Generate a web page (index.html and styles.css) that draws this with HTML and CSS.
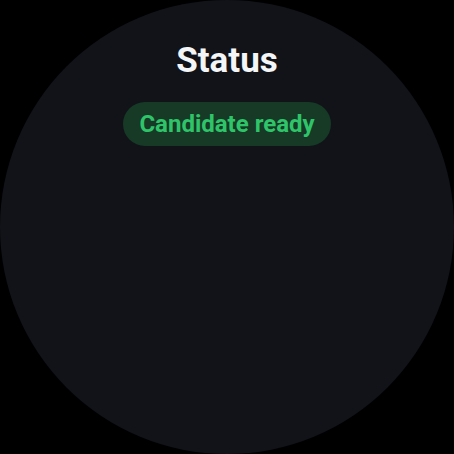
FILE: index.html
```html
<!DOCTYPE html>
<html lang="en">

<head>
    <meta charset="UTF-8">
    <meta name="viewport" content="width=device-width, initial-scale=1.0">
    <title>Status</title>
    <link rel="stylesheet" href="styles.css">
</head>

<body>
    <main class="watch">
        <h1 class="title">Status</h1>
        <div class="pill">Candidate ready</div>
    </main>
</body>

</html>
```

FILE: styles.css
```css
html,
body {
    margin: 0;
    height: 100%;
    background: #000;
}

body {
    font-family: Roboto, "Liberation Sans", sans-serif;
}

/* 表盘：整个圆 */
.watch {
    width: 454px;
    height: 454px;
    border-radius: 50%;
    background: #111318;
    display: flex;
    flex-direction: column;
    align-items: center;
    box-sizing: border-box;
    padding-top: 40px;
}

.title {
    margin: 0;
    font-size: 35px;
    font-weight: 700;
    line-height: 42px;
    color: #f4f5f7;
}

.pill {
    margin-top: 20px;
    height: 44px;
    line-height: 44px;
    padding: 0 16px;
    border-radius: 22px;
    background: #163a25;
    color: #2fc46a;
    font-size: 24px;
    font-weight: 700;
}
```
